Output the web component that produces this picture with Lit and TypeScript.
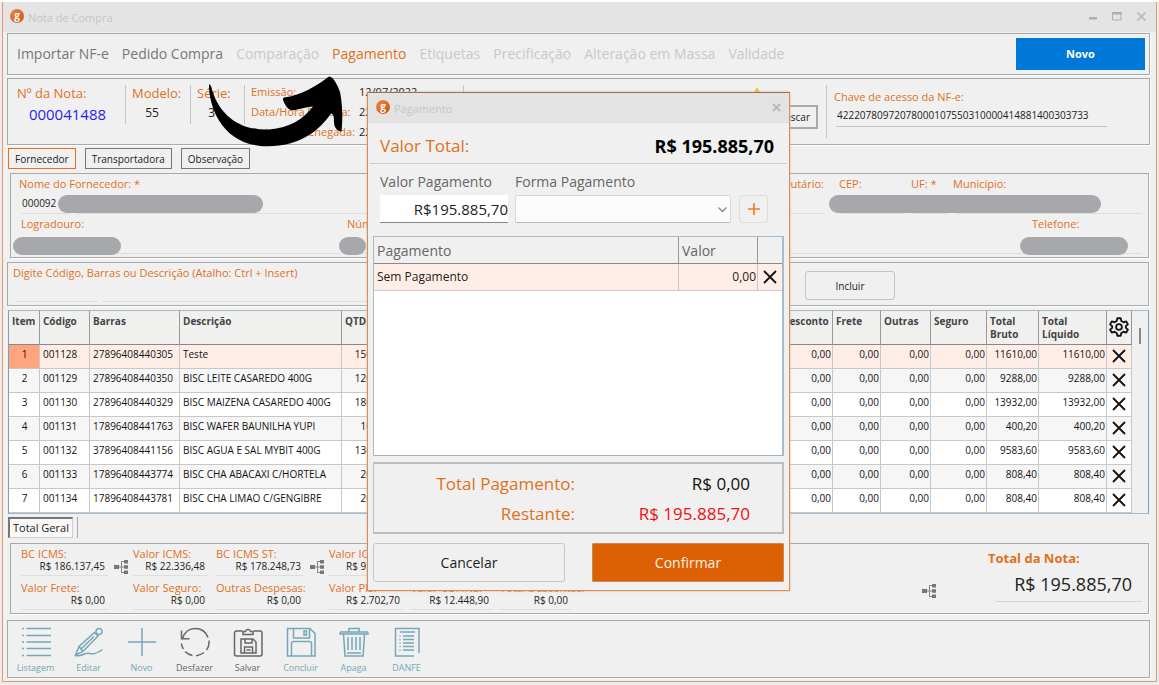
import { LitElement, html, svg, css, nothing } from "lit";
import { customElement, property } from "lit/decorators.js";
import { classMap } from "lit/directives/class-map.js";

interface Item {
  code: string;
  barcode: string;
  name: string;
  qty: string;
  total: string;
}

const ITEMS: Item[] = [
  { code: "001128", barcode: "27896408440305", name: "Teste", qty: "150,00", total: "11610,00" },
  { code: "001129", barcode: "27896408440350", name: "BISC LEITE CASAREDO 400G", qty: "120,00", total: "9288,00" },
  { code: "001130", barcode: "27896408440329", name: "BISC MAIZENA CASAREDO 400G", qty: "180,00", total: "13932,00" },
  { code: "001131", barcode: "17896408441763", name: "BISC WAFER BAUNILHA YUPI", qty: "10,00", total: "400,20" },
  { code: "001132", barcode: "37896408441156", name: "BISC AGUA E SAL MYBIT 400G", qty: "130,00", total: "9583,60" },
  { code: "001133", barcode: "17896408443774", name: "BISC CHA ABACAXI C/HORTELA", qty: "20,00", total: "808,40" },
  { code: "001134", barcode: "17896408443781", name: "BISC CHA LIMAO C/GENGIBRE", qty: "20,00", total: "808,40" },
];

const MENU = [
  { label: "Importar NF-e", state: "on" },
  { label: "Pedido Compra", state: "on" },
  { label: "Comparação", state: "off" },
  { label: "Pagamento", state: "current" },
  { label: "Etiquetas", state: "off" },
  { label: "Precificação", state: "off" },
  { label: "Alteração em Massa", state: "off" },
  { label: "Validade", state: "off" },
];

interface Total {
  label: string;
  value: string;
  icon?: boolean;
}

const TOTALS: Total[][] = [
  [
    { label: "BC ICMS:", value: "R$ 186.137,45", icon: true },
    { label: "Valor ICMS:", value: "R$ 22.336,48" },
    { label: "BC ICMS ST:", value: "R$ 178.248,73", icon: true },
    { label: "Valor ICMS ST:", value: "R$ 9.804,12" },
  ],
  [
    { label: "Valor Frete:", value: "R$ 0,00" },
    { label: "Valor Seguro:", value: "R$ 0,00" },
    { label: "Outras Despesas:", value: "R$ 0,00" },
    { label: "Valor PIS:", value: "R$ 2.702,70" },
    { label: "Valor COFINS:", value: "R$ 12.448,90" },
    { label: "Total Descontos:", value: "R$ 0,00" },
  ],
];

const ICONS: Record<string, unknown> = {
  Listagem: svg`<path d="M5.500 1.500H30M5.500 8.500H30M5.500 15H30M5.500 21.500H30M5.500 28.500H30"/><path d="M1 1.500h2M1 8.500h2M1 15h2M1 21.500h2M1 28.500h2"/>`,
  Editar: svg`<path d="M1.500 28 5 19.500 20.500 5.500 24 9 9 24.500Z"/><circle cx="25" cy="4.500" r="3"/><path d="M5 19.500 9 24.500M7.500 21.500 20 9.500"/><path d="M1.500 28.500C9 30 11 24.500 16 26.500c4 1.200 9-1.500 12.500-4"/>`,
  Novo: svg`<path d="M15 1V29M1 15H29"/>`,
  Desfazer: svg`<path d="M2.500 11.500C5 4 10 1.500 15 1.500c6 0 11 3.500 13 9"/><path d="M1.500 3.500V11.800H9.500"/><path d="M29 13.500c.4 4-.5 7-2.500 9.500M24 25.500c-2.500 2-5 3-8 3.200M12.500 28.500c-3-.6-5.500-2-7.500-4M3.300 22c-1-1.600-1.600-3.500-1.900-5.500"/>`,
  Salvar: svg`<path d="M9.500 4H3.500A2 2 0 0 0 1.500 6V27a2 2 0 0 0 2 2H27a2 2 0 0 0 2-2V6a2 2 0 0 0-2-2H20.500"/><path d="M10 7.500V4.500h2.500a2.600 2.600 0 0 1 5 0H20V7.500Z"/><path d="M8 12H20l3 3V26H8Z M12 12v4h7V12M11.500 26V20h8v6M13.500 23h4"/>`,
  Concluir: svg`<path d="M1.500 1.500H24L29 6.500V29H1.500Z"/><path d="M7.500 1.500V11H23.500V1.500M18 4v4h2.500V4Z"/><path d="M5.500 29V16.500a2 2 0 0 1 2-2h16a2 2 0 0 1 2 2V29"/>`,
  Apaga: svg`<path d="M1 5H29M10 5V1.500H20V5M1 5.500V7H29V5.500"/><path d="M4.500 7 6 29H24L25.500 7M9 10v13M13 10v13M17 10v13M21 10v13M8 26H22"/>`,
  DANFE: svg`<path d="M27 24V1.500H3.500V29H22M27 24v2"/><path d="M8 5H23M11 9H22M11 12.500H22M11 16H22M11 19.500H22M11 23H22M7.500 9h1M7.500 12.500h1M7.500 16h1M7.500 19.500h1M7.500 23h1"/>`,
};

const TOOLS = ["Listagem", "Editar", "Novo", "Desfazer", "Salvar", "Concluir", "Apaga", "DANFE"];
const ENABLED_TOOLS = ["Desfazer", "Salvar"];

const base = css`
  * { box-sizing: border-box; }
  :host { font-family: "Open Sans", "Noto Sans", sans-serif; color: #222; }
  button, input, select { font: inherit; color: inherit; margin: 0; padding: 0; border: 0; background: none; border-radius: 0; min-width: 0; }
  button { white-space: nowrap; }
  svg { display: block; }
`;

const cross = html`<svg width="14" height="14" viewBox="0 0 14 14" fill="none" stroke="#111" stroke-width="1.800"><path d="M1 1 13 13M13 1 1 13"/></svg>`;

const chart = html`<svg width="14" height="14" viewBox="0 0 14 14"><path d="M0 5h5v4H0ZM10 0h4v3.500h-4ZM10 5.200h4v3.500h-4ZM10 10.500h4V14h-4Z" fill="#777"/><path d="M5 7H10M7.500 1.500V12.500M7 1.500h3M7 12.500h3" stroke="#888" fill="none"/></svg>`;

@customElement("brand-mark")
class BrandMark extends LitElement {
  static styles = css`
    :host { display: block; width: 14px; height: 14px; flex: none; }
    .disc { display: block; height: 14px; border-radius: 50%; background: linear-gradient(135deg, #f08a3c, #c9531a); color: #fff; font: bold 10px/12px "Open Sans", sans-serif; text-align: center; }
  `;
  render() {
    return html`<span class="disc">g</span>`;
  }
}

@customElement("payment-dialog")
class PaymentDialog extends LitElement {
  static styles = [
    base,
    css`
      :host { display: block; background: #f0f0f0; border: 1px solid #e28a4c; border-top-color: #a96a48; box-shadow: 0 0 2px #bbb; }
      .title { display: flex; align-items: center; height: 30px; padding: 0 8px 2px; gap: 4px; background: #e3e3e3; color: #c6c6c6; font-size: 11px; }
      .title .name { flex: 1; padding-top: 4px; }
      .total { display: flex; justify-content: space-between; align-items: center; height: 41px; margin: 0 2px; padding: 6px 13px 0 10px; border-bottom: 1px solid #ccc; font-size: 17px; line-height: 24px; }
      .orange { color: #e0701c; }
      .total b { color: #000; font-size: 18px; }
      .form { display: grid; grid-template-columns: 128px 216px 30px; column-gap: 7px; padding: 8px 13px 0 12px; color: #666; font-size: 14px; line-height: 20px; }
      .form label { white-space: nowrap; margin-bottom: 3px; }
      .amount { width: 100%; height: 28px; background: #fff; border-bottom: 1px solid #888; text-align: right; color: #222; font-size: 15px; }
      .pick { position: relative; }
      .pick select { appearance: none; width: 100%; height: 28px; background: #fcfcfc; border: 1px solid #d8d8d8; border-bottom-color: #bbb; border-radius: 2px; }
      .pick svg { position: absolute; right: 4px; top: 11px; pointer-events: none; }
      .add { height: 28px; border: 1px solid #ddd; border-radius: 3px; display: grid; place-items: center; grid-column: 3; margin-left: 1px; }
      .grid { margin: 13px 5px 0; height: 220px; background: #fff; border: 1px solid #a9bccb; border-right-width: 2px; border-bottom-color: #9db5c9; }
      table { width: 100%; table-layout: fixed; border-collapse: separate; border-spacing: 0; }
      th { height: 27px; padding: 2px 3px 0; text-align: left; font-weight: 400; font-size: 14px; line-height: 20px; color: #666; background: #f0f0f0; border-right: 1px solid #999; border-bottom: 1px solid #888; }
      td { height: 27px; padding: 0 3px; font-size: 12px; line-height: 18px; background: #ffeee8; border-right: 1px solid #c9c4c2; border-bottom: 1px solid #ccc; }
      th:last-child, td:last-child { border-right: 0; }
      .c1 { width: auto; } .c2 { width: 79px; } .c3 { width: 24px; }
      .num { text-align: right; padding: 0 1px; }
      .del { display: block; margin: 0 auto; }
      .sum { display: grid; grid-template-columns: 201px 1fr; align-content: start; row-gap: 6px; margin: 6px 5px 0; padding: 8px 32px 0 0; height: 72px; border: 2px solid #bdbdbd; border-left-width: 1px; text-align: right; font-size: 17px; line-height: 24px; }
      .black { color: #111; }
      .red { color: #f01010; }
      .actions { display: grid; grid-template-columns: 1fr 1fr; gap: 27px; margin: 9px 5px 8px; }
      .actions button { height: 39px; border: 1px solid #c6c6c6; border-radius: 3px; font-size: 14px; }
      .actions .go { background: #dd6004; border-color: #c88a5c; border-radius: 1px; color: #fff2e6; }
      .cancel { color: #222; }
    `,
  ];

  render() {
    return html`
      <div class="title">
        <brand-mark></brand-mark><span class="name">Pagamento</span>
        <button aria-label="Fechar"><svg width="9" height="9" viewBox="0 0 9 9" stroke="#b9bbb2" stroke-width="2"><path d="M1 1 8 8M8 1 1 8"/></svg></button>
      </div>
      <div class="total"><span class="orange">Valor Total:</span><b>R$ 195.885,70</b></div>
      <div class="form">
        <label for="amount">Valor Pagamento</label>
        <label for="method">Forma Pagamento</label>
        <span></span>
        <input class="amount" id="amount" .value=${"R$195.885,70"} />
        <span class="pick">
          <select id="method"><option></option></select>
          <svg width="9" height="7" viewBox="0 0 9 7" fill="none" stroke="#888" stroke-width="1.300"><path d="M.5 1.500 4.500 5.500 8.500 1.500"/></svg>
        </span>
        <button class="add" aria-label="Adicionar"><svg width="12" height="12" viewBox="0 0 12 12" stroke="#f07a28" stroke-width="1.600"><path d="M6 0V12M0 6H12"/></svg></button>
      </div>
      <div class="grid">
        <table>
          <colgroup><col class="c1" /><col class="c2" /><col class="c3" /></colgroup>
          <thead><tr><th>Pagamento</th><th>Valor</th><th></th></tr></thead>
          <tbody><tr><td>Sem Pagamento</td><td class="num">0,00</td><td><button class="del" aria-label="Remover">${cross}</button></td></tr></tbody>
        </table>
      </div>
      <div class="sum">
        <span class="orange">Total Pagamento:</span><span class="black">R$ 0,00</span>
        <span class="orange">Restante:</span><span class="red">R$ 195.885,70</span>
      </div>
      <div class="actions"><button class="cancel">Cancelar</button><button class="go">Confirmar</button></div>
    `;
  }
}

@customElement("item-table")
class ItemTable extends LitElement {
  @property({ attribute: false }) items: Item[] = [];

  static styles = [
    base,
    css`
      :host { display: flex; border: 1px solid #a3b9cc; border-left-color: #7f9db9; border-right-color: #7f9db9; background: #f0f0f0; font-size: 10px; line-height: 13px; }
      table { flex: 1; width: 0; table-layout: fixed; border-collapse: separate; border-spacing: 0; }
      th { height: 33px; padding: 4px 3px 3px; text-align: left; vertical-align: top; font-weight: 700; color: #444; background: #f0f0ef; border-right: 1px solid #999; border-bottom: 1px solid #888; }
      td { height: 24px; padding: 0 2px 4px 3px; white-space: nowrap; color: #111; background: #fff; border-right: 1px solid #c8c8c8; border-bottom: 1px solid #c8c8c8; }
      tr:nth-child(even) td { background: #f6f6f6; }
      tr.selected td { background: #ffeee8; }
      tr.selected td.idx { background: #ffa57d; }
      .idx { text-align: center; }
      .num { text-align: right; padding: 0 1px 4px; }
      .act { padding: 0 0 1px; }
      .act button { display: block; margin: 0 auto; }
      th.act { padding: 6px 0 0; }
      .w1 { width: 31px; } .w2 { width: 50px; } .w3 { width: 90px; } .w4 { width: 162px; } .w5 { width: 46px; }
      .w6 { width: 54px; } .w7 { width: 48px; } .w8 { width: 50px; } .w9 { width: 56px; } .w10 { width: 52px; } .w11 { width: 68px; } .w12 { width: 25px; }
      .scroll { width: 16px; padding: 17px 0 0 7px; }
      .thumb { display: block; width: 2px; height: 16px; background: #888; }
    `,
  ];

  render() {
    return html`
      <table>
        <colgroup>
          <col class="w1" /><col class="w2" /><col class="w3" /><col class="w4" /><col class="w5" /><col />
          <col class="w6" /><col class="w7" /><col class="w8" /><col class="w9" /><col class="w10" /><col class="w11" /><col class="w12" />
        </colgroup>
        <thead>
          <tr>
            <th>Item</th><th>Código</th><th>Barras</th><th>Descrição</th><th>QTD</th><th></th>
            <th>Desconto</th><th>Frete</th><th>Outras</th><th>Seguro</th><th>Total Bruto</th><th>Total<br />Líquido</th>
            <th class="act">
              <button aria-label="Configurar colunas">
                <svg width="20" height="20" viewBox="0 0 24 24" fill="none" stroke="#111" stroke-width="2.200" stroke-linejoin="round"><circle cx="12" cy="12" r="3.500"/><path d="M10 1.500h4l.8 3.300 2.600 1.500 3.300-1 2 3.500L20.200 11v2l2.500 2.200-2 3.500-3.300-1-2.600 1.500-.8 3.300h-4l-.8-3.300-2.600-1.500-3.300 1-2-3.500L3.800 13v-2L1.300 8.800l2-3.500 3.300 1 2.600-1.500Z"/></svg>
              </button>
            </th>
          </tr>
        </thead>
        <tbody>
          ${this.items.map(
            (it, i) => html`
              <tr class=${classMap({ selected: i === 0 })}>
                <td class="idx">${i + 1}</td><td>${it.code}</td><td>${it.barcode}</td><td>${it.name}</td>
                <td class="num">${it.qty}</td><td></td>
                <td class="num">0,00</td><td class="num">0,00</td><td class="num">0,00</td><td class="num">0,00</td>
                <td class="num">${it.total}</td><td class="num">${it.total}</td>
                <td class="act"><button aria-label="Excluir item">${cross}</button></td>
              </tr>
            `
          )}
        </tbody>
      </table>
      <span class="scroll"><span class="thumb"></span></span>
    `;
  }
}

@customElement("app-root")
class AppRoot extends LitElement {
  static styles = [
    base,
    css`
      :host { display: block; position: relative; min-height: 100vh; padding: 2px 2px 3px; background: linear-gradient(#fff 2px, #ececec 2px, #ececec calc(100% - 3px), #d3d6dc 0); font-size: 11px; line-height: 14px; }
      .window { position: relative; border: 1px solid #e39a68; border-top: 0; background: #f0f0f0; padding-bottom: 3px; }
      .title { display: flex; align-items: center; height: 30px; padding: 0 10px 2px 7px; gap: 4px; background: #e4e4e4; color: #c6c6c6; }
      .title .name { flex: 1; padding-top: 4px; }
      .title .ctl { margin-left: 11px; }
      .panel { border: 1px solid #a9a9a9; box-shadow: 1px 1px 0 #fff; margin: 0 6px 0 4px; }
      .menu { display: flex; align-items: center; gap: 13px; height: 42px; margin-top: 1px; padding: 0 4px 0 9px; }
      .menu button { font-size: 14px; line-height: 20px; color: #c9c9c9; }
      .menu .on { color: #777; }
      .menu .current { color: #e0701c; }
      .menu .new { margin-left: auto; width: 129px; height: 32px; background: #0078d7; color: #fff; font-size: 11px; font-weight: 700; }
      label, .orange { color: #e0701c; white-space: nowrap; }
      .note { display: flex; height: 67px; margin-top: 3px; padding-top: 6px; }
      .sep { flex: none; width: 1px; height: 39px; background: #c4c4c4; }
      .sep.tall { height: 53px; }
      .cell { display: flex; flex-direction: column; font-size: 13px; line-height: 17px; }
      .cell input { font-size: 12px; line-height: 18px; height: 20px; text-align: center; }
      .cell.a { width: 117px; padding: 0 7px 0 9px; }
      .cell.a input { font-size: 15px; height: 24px; color: #2a1fe6; }
      .cell.b { width: 64px; padding-left: 6px; }
      .cell.b input { width: 40px; }
      .cell.c { width: 53px; padding-left: 6px; }
      .cell.c input { width: 36px; }
      .dates { display: grid; grid-template-columns: 108px 104px; grid-auto-rows: 20px; margin: -3px 0 0 6px; line-height: 20px; }
      .find { flex: 1; display: flex; justify-content: flex-end; align-items: flex-start; gap: 7px; padding-right: 8px; }
      .find .warn { margin: 2px 0 0; }
      .find button { height: 24px; padding: 0 6px; margin-top: 20px; border: 2px solid #aaa; border-left: 0; font-size: 10px; color: #222; }
      .key { width: 322px; padding: 5px 43px 0 7px; }
      .key input { display: block; width: 271px; height: 23px; margin-left: 2px; padding-left: 1px; border-bottom: 1px solid #c4c4c4; font-size: 10px; }
      .tabs { display: flex; gap: 9px; margin: 3px 5px 0; }
      .tabs button { height: 21px; padding: 0 6px; border: 1px solid #777; font-size: 10px; }
      .tabs .sel { border-color: #e0701c; }
      .supplier { margin: 4px 7px 0; height: 85px; padding-top: 2px; }
      .row { display: grid; height: 40px; }
      .row.one { grid-template-columns: 1fr 110px 72px 42px 195px; padding-left: 8px; }
      .row.two { grid-template-columns: 326px 1fr 116px; padding-left: 10px; }
      .field { position: relative; line-height: 16px; padding-right: 6px; }
      .field .line { display: flex; gap: 8px; height: 22px; padding: 0 0 0 2px; }
      .field input { flex: 1; width: 0; border-bottom: 1px solid #dedede; padding-left: 1px; font-size: 10px; }
      .field .short { flex: none; width: 47px; }
      .right { text-align: right; padding-right: 15px; }
      .mask { position: absolute; top: 19px; height: 18px; border-radius: 9px; background: #a7a8ac; }
      .m1 { left: 39px; width: 205px; }
      .m2 { left: -8px; width: 108px; top: 21px; }
      .m3 { left: -8px; width: 27px; top: 21px; }
      .m4 { left: -10px; width: 272px; z-index: 1; }
      .m5 { left: -12px; width: 108px; top: 21px; }
      .search { display: grid; grid-template-columns: 1fr 90px 238px; column-gap: 15px; margin: 4px 7px 0 4px; height: 44px; padding: 3px 0 2px 5px; align-items: start; }
      .search .line { display: flex; gap: 5px; margin-left: 2px; }
      .search input { flex: 1; width: 0; height: 22px; border-bottom: 1px solid #dedede; }
      .search .short { flex: none; width: 83px; }
      .search button { height: 29px; margin-top: 5px; border: 1px solid #c4c4c4; border-radius: 3px; font-size: 10px; }
      item-table { margin: 4px 7px 0 5px; }
      .subtabs { display: flex; gap: 4px; margin: 3px 5px 0; height: 21px; }
      .subtabs button { padding: 0 3px; border: 1px solid #ccc; border-top: 2px solid #777; border-left: 2px solid #777; background: #f8f8f8; }
      .subtabs i { width: 1px; background: #aaa; }
      .totals { display: flex; margin: 5px 7px 0; height: 71px; padding: 3px 6px 0 10px; }
      .sums { flex: 1; }
      .line6 { display: grid; grid-template-columns: 112px 83px 113px 82px 89px 79px; height: 34px; }
      .sum { display: grid; grid-template-columns: 1fr auto; align-content: start; padding-right: 8px; line-height: 13px; }
      .sum label { grid-column: 1 / 3; }
      .sum input { width: 100%; height: 16px; padding: 0 3px 3px 0; border-bottom: 1px solid #dedede; text-align: right; font-size: 10px; }
      .sum.iconic { padding-right: 5px; }
      .sum.wide { padding-right: 25px; }
      .sum svg { margin-left: 6px; }
      .more { margin: 37px 60px 0 0; }
      .grand { width: 146px; padding-top: 2px; }
      .grand label { display: block; margin-left: -8px; font-size: 13px; line-height: 18px; font-weight: 700; }
      .grand input { width: 100%; height: 35px; padding-right: 10px; text-align: right; border-bottom: 1px solid #d4d4d4; font-size: 18px; }
      .tools { display: flex; margin-top: 6px; height: 58px; padding-left: 1px; }
      .tools button { width: 53px; padding-top: 6px; display: flex; flex-direction: column; align-items: center; gap: 4px; font-size: 9px; line-height: 14px; color: #76a6b8; }
      .tools .live { color: #666; }
      .overlay { position: absolute; inset: 92px 2px 0 0; display: flex; justify-content: center; align-items: flex-start; pointer-events: none; }
      payment-dialog { width: 423px; pointer-events: auto; }
      .arrow { position: absolute; left: 200px; top: 70px; pointer-events: none; }
    `,
  ];

  private field(id: string, label: string, extra: unknown = nothing, cls = "") {
    return html`<div class="field ${cls}"><label for=${id}>${label}</label><div class="line"><input id=${id} /></div>${extra}</div>`;
  }

  private renderNote() {
    const dates = [
      ["Emissão:", "12/07/2022"],
      ["Data/Hora Entrada:", "22"],
      ["Data/Hora Chegada:", "22"],
    ];
    return html`
      <section class="panel note">
        <div class="cell a"><label for="num">Nº da Nota:</label><input id="num" .value=${"000041488"} /></div>
        <span class="sep"></span>
        <div class="cell b"><label for="model">Modelo:</label><input id="model" .value=${"55"} /></div>
        <span class="sep"></span>
        <div class="cell c"><label for="serie">Série:</label><input id="serie" .value=${"31"} /></div>
        <span class="sep"></span>
        <div class="dates">${dates.map(([k, v]) => html`<span class="orange">${k}</span><span>${v}</span>`)}</div>
        <span class="sep"></span>
        <div class="find">
          <svg class="warn" width="16" height="14" viewBox="0 0 16 14"><path d="M8 0 16 14H0Z" fill="#f5bd1f"/></svg>
          <button>Buscar</button>
        </div>
        <span class="sep tall"></span>
        <div class="key">
          <label for="key">Chave de acesso da NF-e:</label>
          <input id="key" .value=${"42220780972078000107550310000414881400303733"} />
        </div>
      </section>
    `;
  }

  private renderSupplier() {
    return html`
      <section class="panel supplier">
        <div class="row one">
          <div class="field">
            <label for="sup">Nome do Fornecedor: *</label>
            <div class="line"><input class="short" id="sup" .value=${"000092"} /><input aria-label="Nome" /></div>
            <span class="mask m1"></span>
          </div>
          ${this.field("reg", "Regime Tributário:", nothing, "right")}
          ${this.field("cep", "CEP:", html`<span class="mask m4"></span>`)}
          ${this.field("uf", "UF: *")} ${this.field("city", "Município:")}
        </div>
        <div class="row two">
          ${this.field("street", "Logradouro:", html`<span class="mask m2"></span>`)}
          ${this.field("no", "Número:", html`<span class="mask m3"></span>`)}
          ${this.field("tel", "Telefone:", html`<span class="mask m5"></span>`)}
        </div>
      </section>
    `;
  }

  private renderTotals() {
    return html`
      <section class="panel totals">
        <div class="sums">
          ${TOTALS.map(
            (row, r) => html`<div class="line6">
              ${row.map((t, c) => {
                const wide = c % 2 === 0 && c < 3 && !t.icon;
                return html`<div class=${classMap({ sum: true, iconic: !!t.icon, wide })}>
                  <label for="t${r}${c}">${t.label}</label><input id="t${r}${c}" .value=${t.value} />${t.icon ? chart : nothing}
                </div>`;
              })}
            </div>`
          )}
        </div>
        <span class="more">${chart}</span>
        <div class="grand"><label for="grand">Total da Nota:</label><input id="grand" .value=${"R$ 195.885,70"} /></div>
      </section>
    `;
  }

  render() {
    return html`
      <main class="window">
        <header class="title">
          <brand-mark></brand-mark><span class="name">Nota de Compra</span>
          <button class="ctl" aria-label="Minimizar"><svg width="9" height="9" viewBox="0 0 9 9"><path d="M1 5h8v2.500H1Z" fill="#aeb0a2"/></svg></button>
          <button class="ctl" aria-label="Maximizar"><svg width="10" height="9" viewBox="0 0 10 9"><path d="M.5.500h8.500v7.500H.5Z" fill="none" stroke="#aeb0a2"/><path d="M0 0h9.500v2.500H0Z" fill="#aeb0a2"/></svg></button>
          <button class="ctl" aria-label="Fechar"><svg width="9" height="9" viewBox="0 0 9 9" stroke="#bcbeb5" stroke-width="1.800"><path d="M.5.500 8.500 8.500M8.500.500.500 8.500"/></svg></button>
        </header>
        <nav class="panel menu">
          ${MENU.map((m) => html`<button class=${m.state}>${m.label}</button>`)}
          <button class="new">Novo</button>
        </nav>
        ${this.renderNote()}
        <div class="tabs"><button class="sel">Fornecedor</button><button>Transportadora</button><button>Observação</button></div>
        ${this.renderSupplier()}
        <section class="panel search">
          <div>
            <label for="find">Digite Código, Barras ou Descrição (Atalho: Ctrl + Insert)</label>
            <div class="line"><input class="short" id="find" /><input aria-label="Descrição" /></div>
          </div>
          <button>Incluir</button>
        </section>
        <item-table .items=${ITEMS}></item-table>
        <div class="subtabs"><button>Total Geral</button><i></i></div>
        ${this.renderTotals()}
        <footer class="panel tools">
          ${TOOLS.map(
            (t) => html`<button class=${classMap({ live: ENABLED_TOOLS.includes(t) })}>
              <svg width="30" height="30" viewBox="0 0 30 30" fill="none" stroke="currentColor" stroke-width="1.500">${ICONS[t]}</svg>${t}
            </button>`
          )}
        </footer>
      </main>
      <svg class="arrow" width="150" height="80" viewBox="200 70 150 80">
        <path d="M209 84C208.500 106 222 146 267 146.300C300 146.500 320 130 331 113.500C334 114 334 118 334 122C334 128 338 131.500 341.500 131.500C342.500 122 343 106 340 92C338 86 333 76 329 76.500C318 85 300 96 284 97.500C282 98 283 101 286 106C288 110 293 111 297 109.500C302 108.500 308 107 313 106.500C303 119 290 128 269 129.500C240 131 218 115 211 86Z"/>
      </svg>
      <div class="overlay"><payment-dialog></payment-dialog></div>
    `;
  }
}
